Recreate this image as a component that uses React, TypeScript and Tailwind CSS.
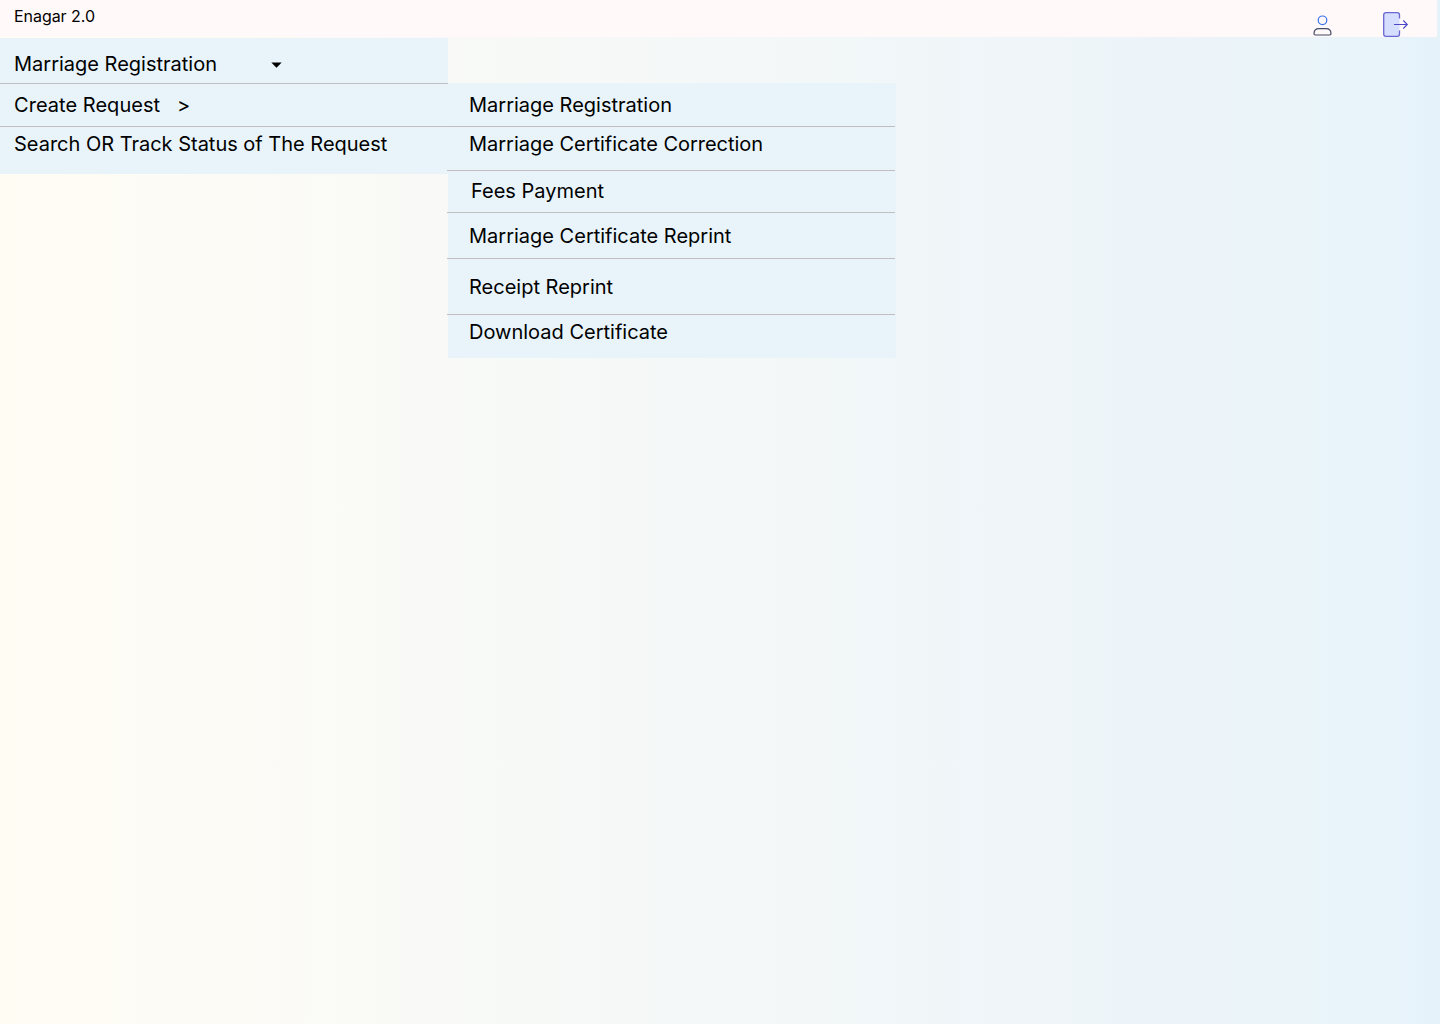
type Row = { label: string; row: string };

const requestTypes: Row[] = [
  { label: 'Marriage Registration', row: 'h-11 pt-[7px] pl-[22px] border-b' },
  { label: 'Marriage Certificate Correction', row: 'h-11 pt-[2px] pl-[22px] border-b tracking-[-0.02px]' },
  { label: 'Fees Payment', row: 'h-[42px] pt-[5px] pl-[24px] border-b' },
  { label: 'Marriage Certificate Reprint', row: 'h-[46px] pt-[8px] pl-[22px] border-b' },
  { label: 'Receipt Reprint', row: 'h-14 pt-[13px] pl-[22px] border-b' },
  { label: 'Download Certificate', row: 'h-[43px] pt-[2px] pl-[22px]' },
];

function UserIcon() {
  return (
    <svg width="20" height="24" viewBox="0 0 20 24" fill="none" strokeWidth="1.2">
      <circle cx="9.5" cy="8.3" r="4.3" stroke="#3d73ee" />
      <path
        d="M1 21.6C1 18.5 3 16.6 6 16.6H13C16 16.6 18 18.5 18 21.6C18 22.5 17.5 23 16.7 23H2.3C1.5 23 1 22.5 1 21.6Z"
        stroke="#414b66"
      />
    </svg>
  );
}

function LogoutIcon() {
  return (
    <svg width="28" height="28" viewBox="0 0 28 28" fill="none">
      <path
        d="M17.5 8.5V5C17.5 3.5 16.8 2.7 15.3 2.7H4C2.5 2.7 1.7 3.5 1.7 5V24C1.7 25.5 2.5 26.3 4 26.3H15.3C16.8 26.3 17.5 25.5 17.5 24V20.5"
        fill="#d6deff"
        stroke="#6b66d2"
        strokeWidth="1.3"
      />
      <path d="M12 14.5H25.3M21.3 10.5L25.3 14.5L21.3 18.5" stroke="#4b47c8" strokeWidth="1.1" />
    </svg>
  );
}

export default function App() {
  return (
    <div className="h-[1024px] w-[1440px] overflow-hidden bg-[linear-gradient(90deg,#fffcf4_0%,#fffcf5_3%,#f4f8f8_50%,#edf4f9_80%,#e8f4fa_97%,#e5f2fa_100%)] font-['Inter',sans-serif] text-black">
      <header className="flex h-[37px] w-[1437px] bg-[#fff9f9] pl-[14px]">
        <h1 className="mt-[4px] text-base tracking-[-0.05px]">Enagar 2.0</h1>
        <div className="mt-[12px] mr-[27px] ml-auto flex items-start gap-[49px]">
          <button aria-label="Profile"><UserIcon /></button>
          <button className="-mt-[2px]" aria-label="Log out"><LogoutIcon /></button>
        </div>
      </header>
      <main className="mt-px flex items-start text-xl leading-[30px]">
        <nav className="w-[448px] bg-[#e8f4fa]">
          <div className="flex h-[46px] items-start border-b border-[#c2bec4] pt-[11px] pl-[14px]">
            <span className="w-[257px]">Marriage Registration</span>
            <svg className="mt-[13px]" width="11" height="6" viewBox="0 0 11 6">
              <path d="M0.3 0.5H10.7L5.5 5.7Z" fill="#000" />
            </svg>
          </div>
          <div className="flex h-[43px] border-b border-[#c2bec4] pt-[6px] pl-[14px]">
            <span className="w-[163px] tracking-[0.04px]">Create Request</span>
            <span>&gt;</span>
          </div>
          <div className="h-[47px] pt-[2px] pl-[14px] tracking-[-0.01px]">Search OR Track Status of The Request</div>
        </nav>
        <ul className="mt-[45px] -ml-px w-[449px] bg-[linear-gradient(#e8f4fa,#e8f4fa)] bg-[length:448px_100%] bg-right bg-no-repeat pr-px">
          {requestTypes.map(({ label, row }) => (
            <li key={label} className={`${row} border-[#c2bec0]`}>{label}</li>
          ))}
        </ul>
      </main>
    </div>
  );
}
